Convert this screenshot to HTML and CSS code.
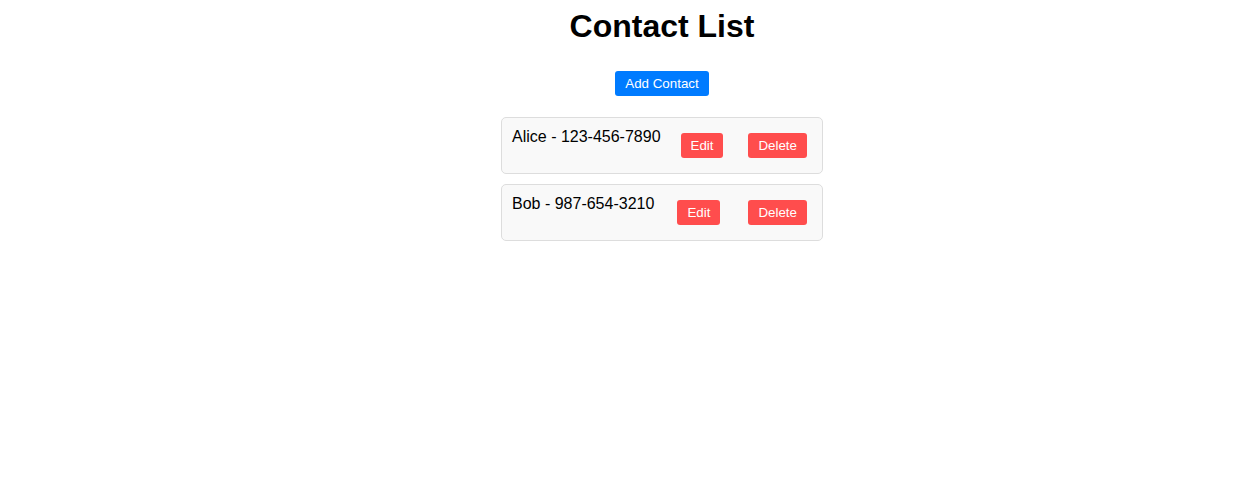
FILE: index.html
```html
<!DOCTYPE html>
<html>
<head>
<meta charset="utf-8">
<link rel="stylesheet" href="styles.css">
</head>
<body>
<div class="app">
  <h1 class="title">Contact List</h1>
  <button class="btn btn-add">Add Contact</button>
  <ul class="contacts">
    <li class="contact">
      <span class="contact-text">Alice - 123-456-7890</span>
      <button class="btn btn-danger">Edit</button>
      <button class="btn btn-danger">Delete</button>
    </li>
    <li class="contact">
      <span class="contact-text">Bob - 987-654-3210</span>
      <button class="btn btn-danger">Edit</button>
      <button class="btn btn-danger">Delete</button>
    </li>
  </ul>
</div>
</body>
</html>
```

FILE: styles.css
```css
html, body {
  margin: 0;
  padding: 0;
  background: #ffffff;
}
body {
  font-family: "Liberation Sans", Arial, sans-serif;
  color: #000;
}
.app {
  display: flex;
  flex-direction: column;
  align-items: center;
  padding: 8px 0 0 70px;
}
.title {
  font-size: 32px;
  font-weight: bold;
  margin: 0 0 26px 0;
  line-height: 37px;
}
.btn {
  font-family: "Liberation Sans", Arial, sans-serif;
  font-size: 13.333px;
  color: #fff;
  border: none;
  border-radius: 3px;
  padding: 5px 10px;
  line-height: 15px;
  cursor: pointer;
}
.btn-add {
  background: #007bff;
  margin-bottom: 21px;
}
.btn-danger {
  background: #ff4d4d;
  margin: 5px;
}
.contacts {
  list-style: none;
  margin: 0;
  padding: 0;
  display: flex;
  flex-direction: column;
  gap: 10px;
}
.contact {
  width: 300px;
  padding: 10px;
  background: #f9f9f9;
  border: 1px solid #ddd;
  border-radius: 5px;
  display: flex;
  justify-content: space-between;
}
.contact-text {
  font-size: 16px;
  line-height: 18px;
}
```
